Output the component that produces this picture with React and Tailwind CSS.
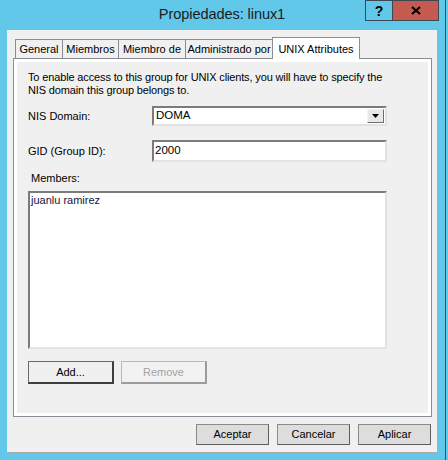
import React from "react";

const tabs = [
  { label: "General", w: "w-[48px]" },
  { label: "Miembros", w: "w-[57px]" },
  { label: "Miembro de", w: "w-[68px]" },
  { label: "Administrado por", w: "w-[88px]" },
];

function Sunken({ className = "", children }) {
  return (
    <div
      className={`border-2 border-t-[#7b7b7b] border-l-[#7b7b7b] border-b-[#e3e3e3] border-r-[#e3e3e3] bg-white ${className}`}
    >
      {children}
    </div>
  );
}

export default function App() {
  return (
    <div className="w-[448px] h-[460px] bg-[#62c8ea] flex overflow-hidden font-['Liberation_Sans',Arial,sans-serif] text-[11px] text-black">
      <div className="w-[445px] flex flex-col relative">
        {/* title bar */}
        <div className="h-[30px] w-[444px] flex items-center justify-center">
          <span className="text-[14.6px] text-[#1c1c1c] tracking-[-0.1px]">Propiedades: linux1</span>
        </div>
        <div className="absolute top-0 left-[365px] flex">
          <div className="w-[28px] h-[21px] border border-[#3d4852] flex items-center justify-center font-bold text-[14px] leading-none">
            ?
          </div>
          <div className="w-[46px] h-[21px] border border-l-0 border-[#3d4852] bg-[#c55a50] flex items-center justify-center">
            <svg width="10" height="9" viewBox="0 0 10 9">
              <path d="M1 1 L9 8 M9 1 L1 8" stroke="#000" strokeWidth="2.2" />
            </svg>
          </div>
        </div>

        {/* client area */}
        <div className="ml-[7px] w-[430px] h-[423px] bg-[#f0f0f0] border-b border-[#a8a8a8] flex flex-col pt-[7px] pl-[6px]">
          {/* tabs */}
          <div className="flex items-end h-[21px] pl-[2px] relative z-10">
            {tabs.map((t, i) => (
              <div
                key={t.label}
                className={`${t.w} h-[19px] border border-b-0 border-[#8a8d96] bg-[#f0f0f0] flex items-center justify-center ${i > 0 ? "-ml-px" : ""}`}
              >
                {t.label}
              </div>
            ))}
            <div className="w-[88px] h-[22px] -mb-px -ml-px border border-b-0 border-[#8a8d96] bg-white flex justify-center pt-[3px]">
              UNIX Attributes
            </div>
          </div>

          {/* panel */}
          <div className="w-[419px] h-[359px] border border-[#8a8d96] bg-white p-[3px]">
            <div className="w-full h-full bg-[#f0f0f0] flex flex-col pl-[11px] pt-[9px]">
              <div className="leading-[13px] tracking-[-0.14px]">
                <div>To enable access to this group for UNIX clients, you will have to specify the</div>
                <div>NIS domain this group belongs to.</div>
              </div>

              <div className="flex items-center mt-[9px] h-[20px]">
                <div className="w-[124px]">NIS Domain:</div>
                <Sunken className="w-[235px] h-[20px] flex items-stretch">
                  <div className="flex-1 flex items-center pl-[2px] text-[11.5px]">DOMA</div>
                  <div className="w-[17px] my-px mr-px bg-[#e8e8e8] border border-t-[#f4f4f4] border-l-[#f4f4f4] border-b-[#6e6e6e] border-r-[#6e6e6e] flex items-center justify-center">
                    <svg width="7" height="4" viewBox="0 0 7 4">
                      <path d="M0 0 H7 L3.5 4 Z" fill="#000" />
                    </svg>
                  </div>
                </Sunken>
              </div>

              <div className="flex items-center mt-[14px] h-[22px]">
                <div className="w-[124px]">GID (Group ID):</div>
                <Sunken className="w-[235px] h-[22px] flex items-center pl-[1px] text-[11.5px]">2000</Sunken>
              </div>

              <div className="mt-[10px] pl-[3px] leading-[13px]">Members:</div>

              <Sunken className="mt-[6px] w-[359px] h-[158px] pl-[1px] pt-[1px] leading-[13px] text-[#14143c]">
                juanlu ramirez
              </Sunken>

              <div className="flex gap-[7px] mt-[12px]">
                <div className="w-[86px] h-[23px] bg-[#f0f0f0] border border-[#6a6a6a] border-b-2 border-r-2 border-b-[#3e3e3e] border-r-[#3e3e3e] flex items-center justify-center">
                  Add...
                </div>
                <div className="w-[86px] h-[23px] bg-[#f2f2f2] border border-[#b9b9b9] border-b-2 border-r-2 border-b-[#9c9c9c] border-r-[#9c9c9c] flex items-center justify-center text-[#a3a3a3]">
                  Remove
                </div>
              </div>
            </div>
          </div>

          {/* bottom buttons */}
          <div className="flex justify-end gap-[8px] mt-[7px] pr-[6px]">
            {["Aceptar", "Cancelar", "Aplicar"].map((b) => (
              <div
                key={b}
                className="w-[73px] h-[21px] bg-[#dddddd] border border-[#8a8a8a] border-b-[#5e5e5e] border-r-[#5e5e5e] flex items-center justify-center"
              >
                {b}
              </div>
            ))}
          </div>
        </div>
      </div>
      <div className="w-px h-full bg-[#3f4d57]" />
      <div className="flex-1 h-full bg-[#62c8ea]" />
    </div>
  );
}
